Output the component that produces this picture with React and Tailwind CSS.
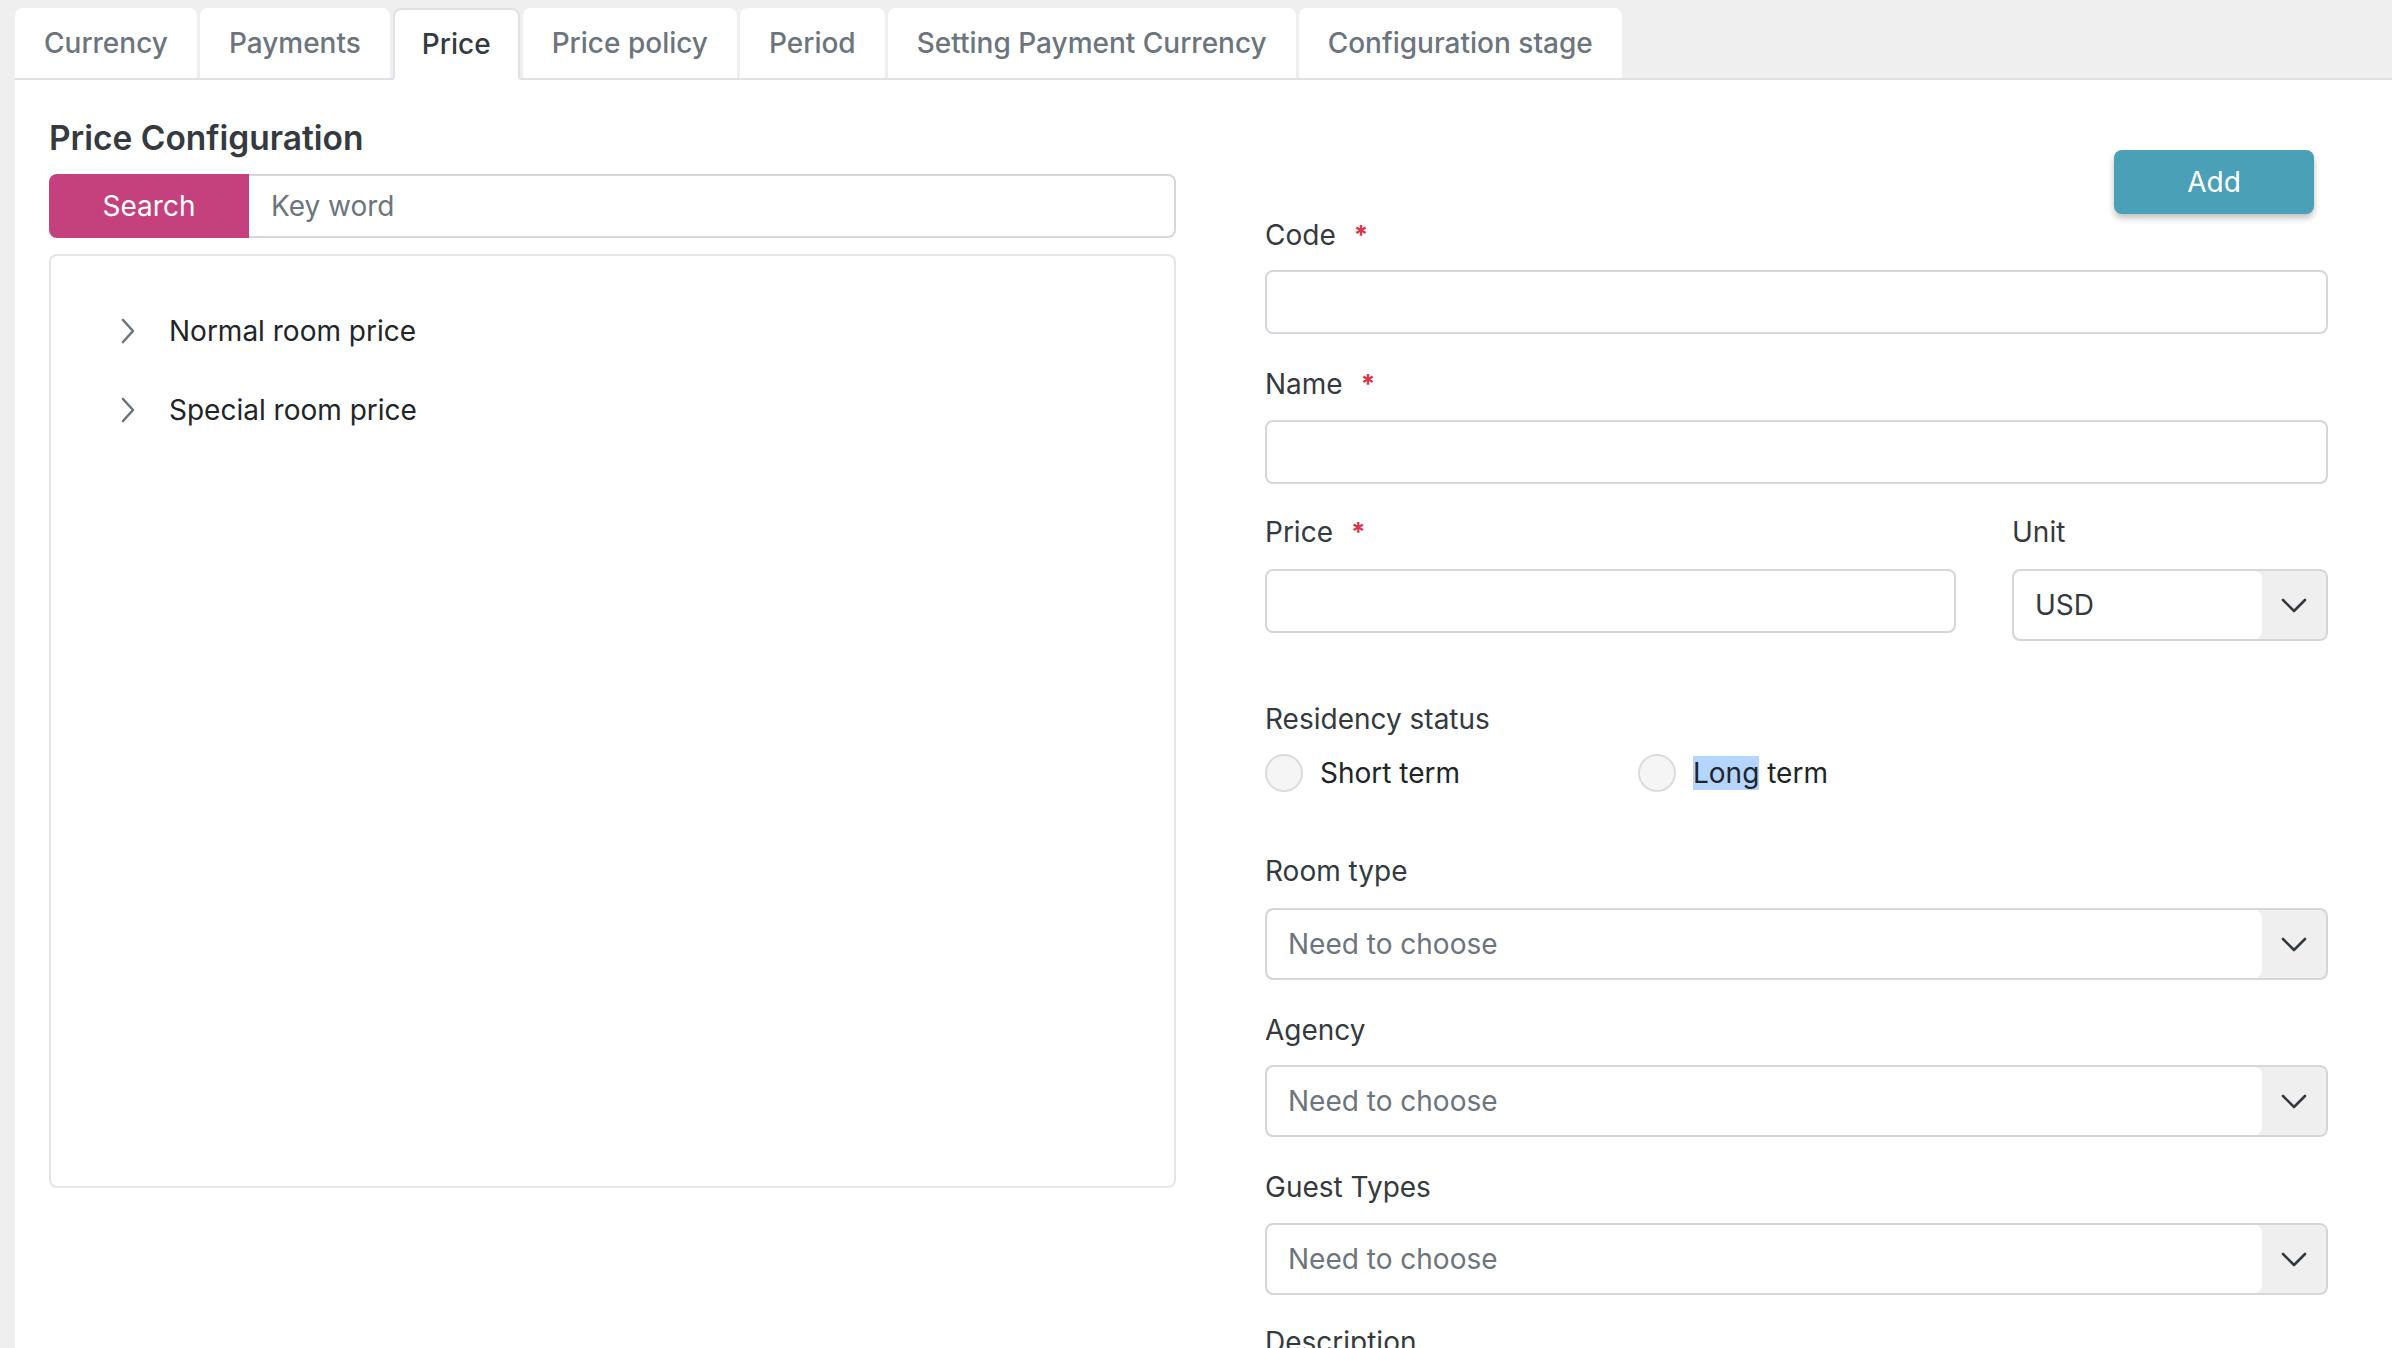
import React from 'react';

const tabs = ['Currency', 'Payments', 'Price', 'Price policy', 'Period', 'Setting Payment Currency', 'Configuration stage'];

function ChevronRight() {
  return (
    <svg width="16" height="26" viewBox="0 0 16 26" fill="none" stroke="#6c757d" strokeWidth="2.6" strokeLinecap="round" strokeLinejoin="round">
      <path d="M3 2 L13 13 L3 24" />
    </svg>
  );
}

function ChevronDown() {
  return (
    <svg width="26" height="15" viewBox="0 0 26 15" fill="none" stroke="#343a40" strokeWidth="2.6" strokeLinecap="round" strokeLinejoin="round">
      <path d="M2 2 L13 13 L24 2" />
    </svg>
  );
}

function Label({ children, required }) {
  return (
    <div className="h-[40px] leading-[40px] text-[28px] text-[#343a40] flex items-center">
      <span>{children}</span>
      {required && <span className="ml-[18px] text-[#dc3545] font-bold text-[26px]">*</span>}
    </div>
  );
}

function TextInput({ className = '' }) {
  return <div className={`h-[64px] rounded-[8px] border-2 border-[#d3d7db] bg-white ${className}`} />;
}

function Select({ value, placeholder }) {
  return (
    <div className="h-[72px] rounded-[8px] border-2 border-[#d3d7db] bg-[#efefef] flex">
      <div className="flex-1 bg-white rounded-[8px] flex items-center px-[21px] text-[28px]">
        {value ? <span className="text-[#343a40]">{value}</span> : <span className="text-[#6c757d]">{placeholder}</span>}
      </div>
      <div className="w-[64px] flex items-center justify-center">
        <ChevronDown />
      </div>
    </div>
  );
}

function Radio({ children }) {
  return (
    <div className="flex items-center gap-[17px]">
      <div className="w-[38px] h-[38px] rounded-full border-2 border-[#dadde0] bg-[#f5f5f5]" />
      <span className="text-[28px] text-[#212529]">{children}</span>
    </div>
  );
}

export default function App() {
  return (
    <div className="min-h-screen w-full bg-[#efefef] pl-[15px] pt-[8px]" style={{ fontFamily: 'Inter, "Noto Sans", sans-serif' }}>
      <div className="flex items-end border-b-2 border-[#dee2e6] gap-[3px]">
        {tabs.map(t => (
          t === 'Price' ? (
            <div key={t} className="h-[72px] -mb-[2px] px-[27px] flex items-center bg-white rounded-t-[8px] border-2 border-[#dee2e6] border-b-white text-[28px] font-medium text-[#343a40]">
              {t}
            </div>
          ) : (
            <div key={t} className="h-[72px] -mb-[2px] px-[29px] flex items-center bg-white rounded-t-[8px] border-b-2 border-[#dee2e6] text-[28px] font-medium text-[#6c757d]">
              {t}
            </div>
          )
        ))}
      </div>

      <div className="bg-white min-h-[1270px] flex pl-[34px]">
        <div className="w-[1127px] pt-[36px]">
          <h2 className="text-[33.5px] leading-[44px] font-semibold text-[#343a40]">Price Configuration</h2>
          <div className="mt-[14px] flex h-[64px]">
            <div className="w-[200px] bg-[#c4417e] rounded-l-[8px] flex items-center justify-center text-white text-[28px]">Search</div>
            <div className="flex-1 border-2 border-l-0 border-[#d3d7db] rounded-r-[8px] flex items-center px-[22px] text-[28px] text-[#6c757d]">Key word</div>
          </div>
          <div className="mt-[16px] h-[934px] border-2 border-[#e3e6e9] rounded-[8px] pt-[55px] pl-[69px] flex flex-col gap-[39px]">
            {['Normal room price', 'Special room price'].map(n => (
              <div key={n} className="h-[40px] flex items-center gap-[33px] text-[28px] text-[#212529]">
                <ChevronRight />
                <span>{n}</span>
              </div>
            ))}
          </div>
        </div>

        <div className="w-[1063px] ml-[89px] pt-[70px]">
          <div className="flex justify-end pr-[14px]">
            <button className="w-[200px] h-[64px] rounded-[8px] bg-[#4aa1b7] text-white text-[28px] shadow-[0_4px_6px_rgba(0,0,0,0.25)]">Add</button>
          </div>
          <div className="mt-[1px]"><Label required>Code</Label></div>
          <TextInput className="mt-[15px]" />
          <div className="mt-[30px]"><Label required>Name</Label></div>
          <TextInput className="mt-[16px]" />
          <div className="mt-[28px] flex gap-[56px]">
            <div className="flex-1">
              <Label required>Price</Label>
              <TextInput className="mt-[17px]" />
            </div>
            <div className="w-[316px]">
              <Label>Unit</Label>
              <div className="mt-[17px]"><Select value="USD" /></div>
            </div>
          </div>
          <div className="mt-[58px]"><Label>Residency status</Label></div>
          <div className="mt-[14px] h-[40px] flex items-center">
            <div className="w-[373px]"><Radio>Short term</Radio></div>
            <Radio><span className="bg-[#b4d5fe]">Long</span> term</Radio>
          </div>
          <div className="mt-[58px]"><Label>Room type</Label></div>
          <div className="mt-[17px]"><Select placeholder="Need to choose" /></div>
          <div className="mt-[30px]"><Label>Agency</Label></div>
          <div className="mt-[15px]"><Select placeholder="Need to choose" /></div>
          <div className="mt-[30px]"><Label>Guest Types</Label></div>
          <div className="mt-[16px]"><Select placeholder="Need to choose" /></div>
          <div className="mt-[27px]"><Label>Description</Label></div>
        </div>
      </div>
    </div>
  );
}
